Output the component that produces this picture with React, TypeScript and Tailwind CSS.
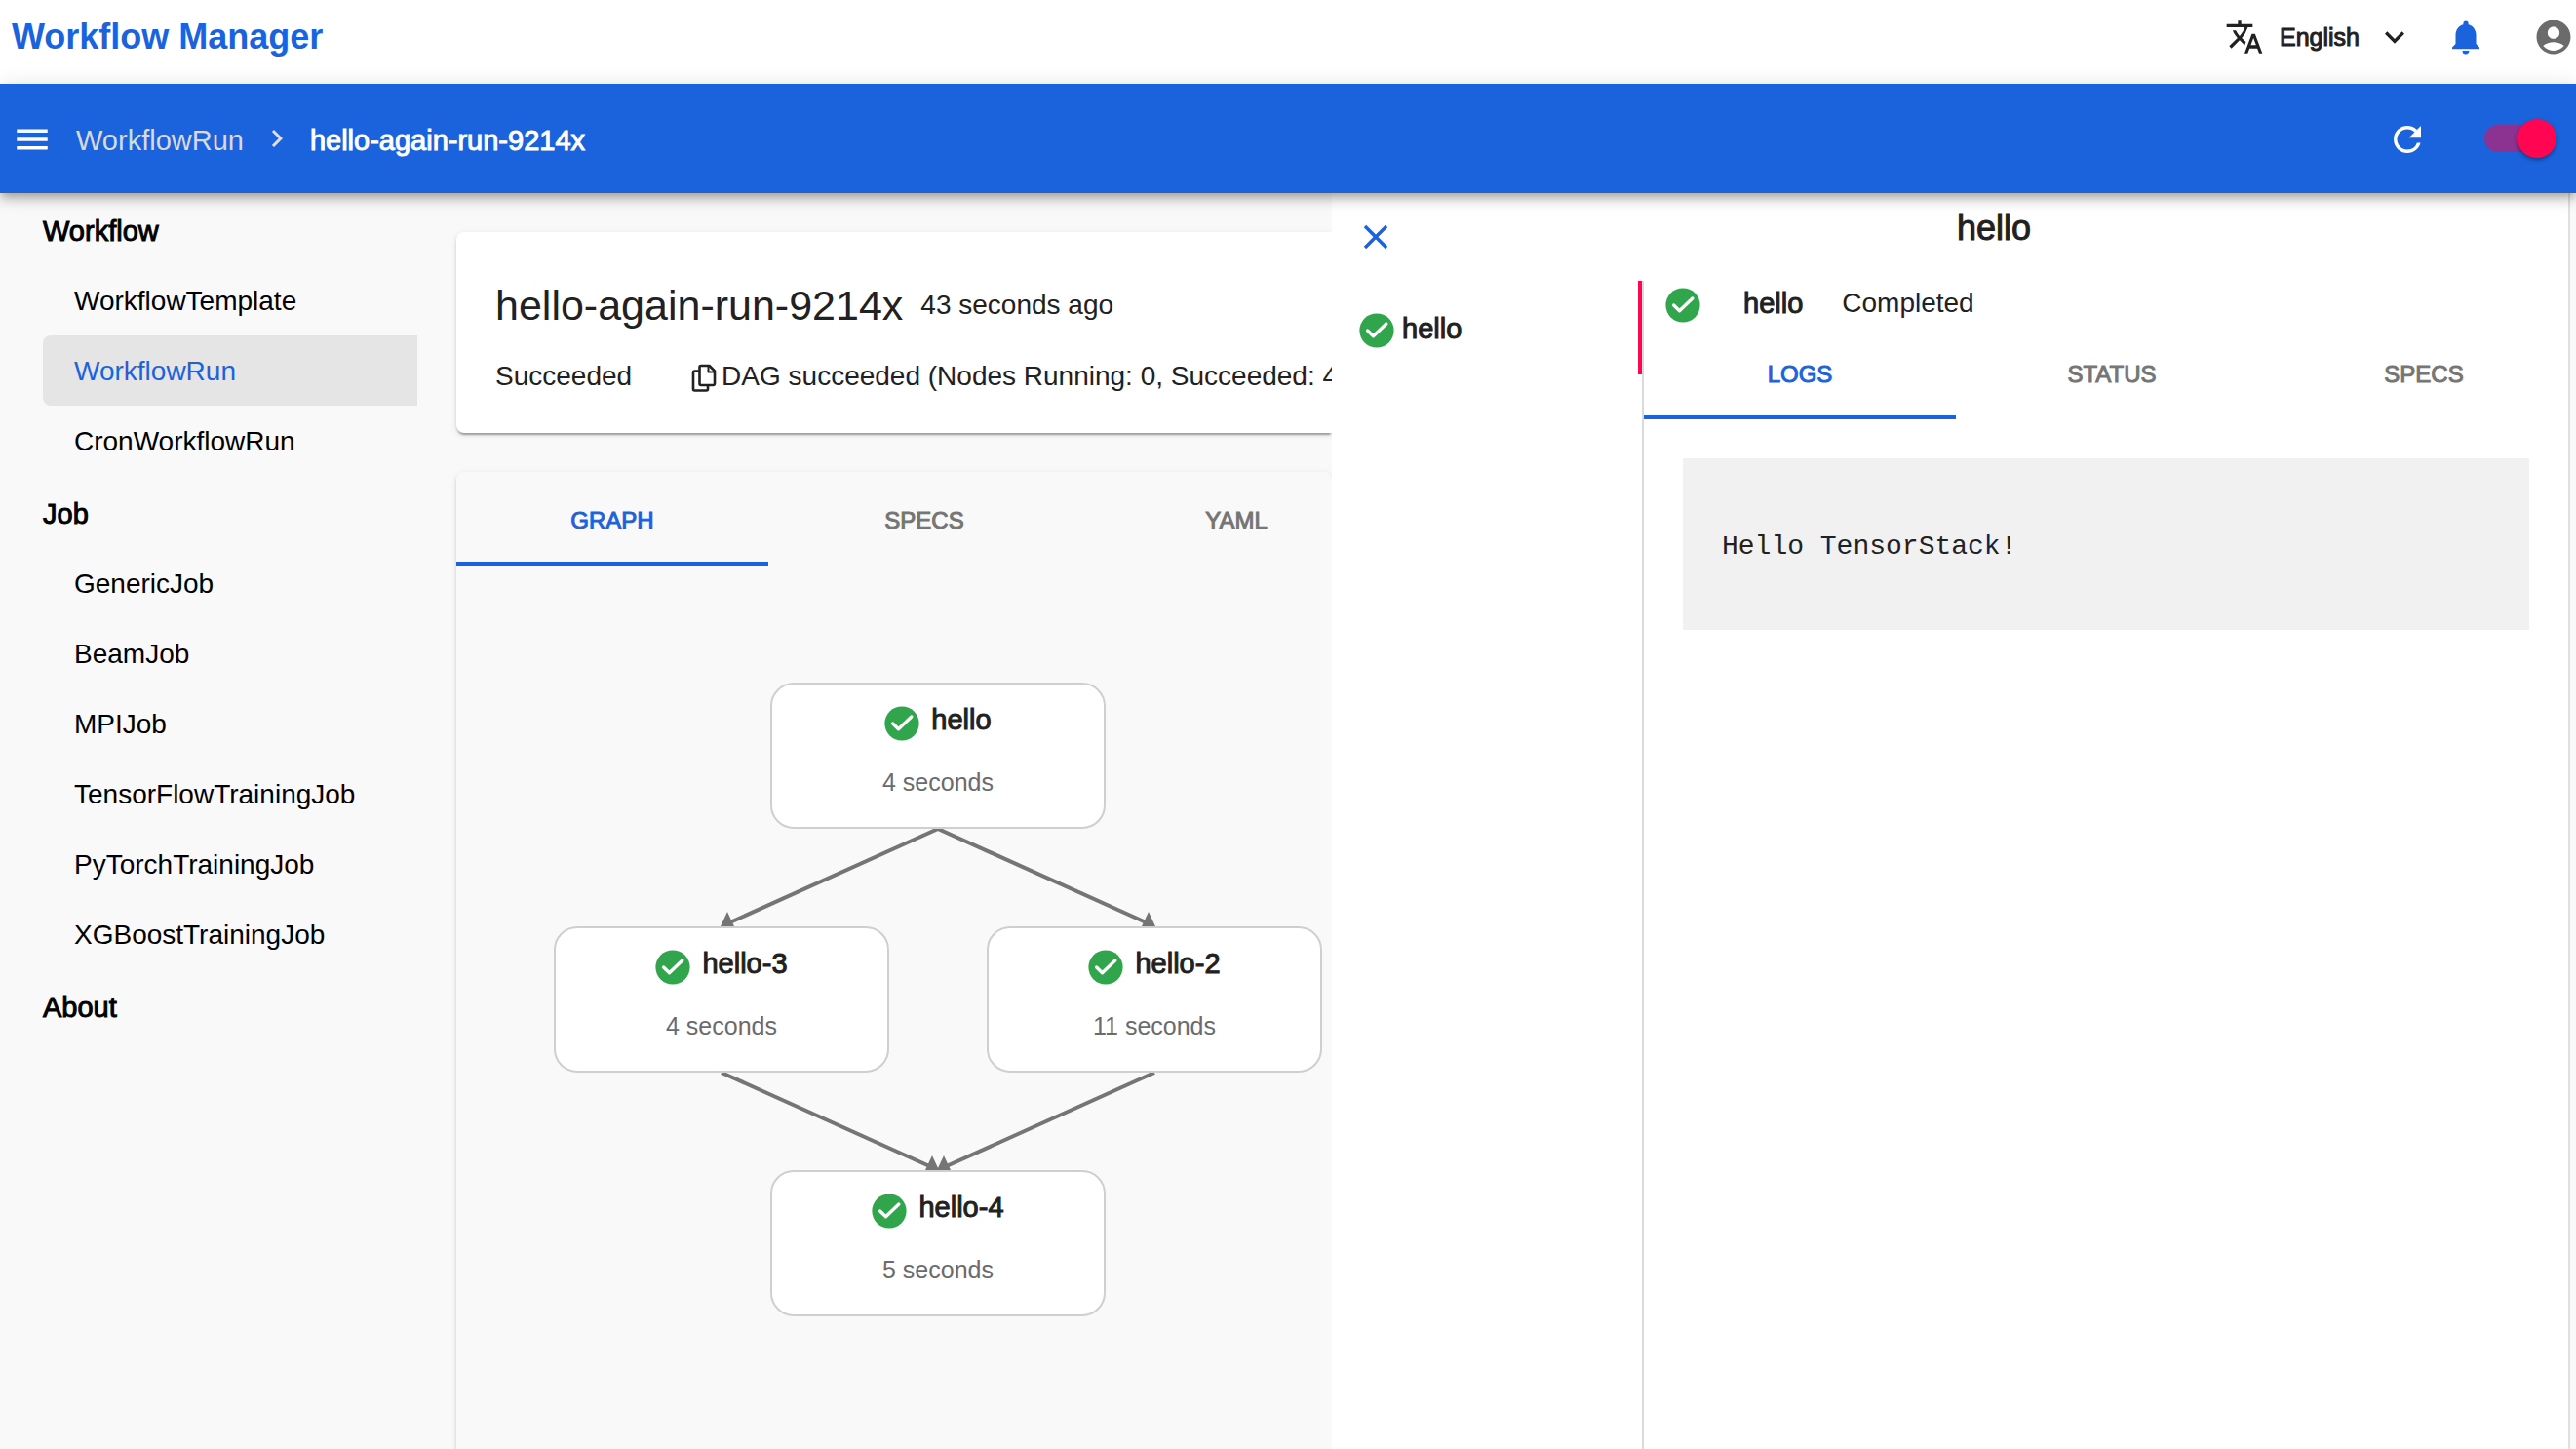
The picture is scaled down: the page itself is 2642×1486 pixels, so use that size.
import React from "react";
import {
  MdTranslate,
  MdExpandMore,
  MdNotifications,
  MdAccountCircle,
  MdMenu,
  MdChevronRight,
  MdRefresh,
  MdClose,
} from "react-icons/md";

const groups = [
  { title: "Workflow", items: ["WorkflowTemplate", "WorkflowRun", "CronWorkflowRun"] },
  {
    title: "Job",
    items: ["GenericJob", "BeamJob", "MPIJob", "TensorFlowTrainingJob", "PyTorchTrainingJob", "XGBoostTrainingJob"],
  },
  { title: "About", items: [] },
];

const nodes = [
  { name: "hello", time: "4 seconds", x: 322, y: 120 },
  { name: "hello-3", time: "4 seconds", x: 100, y: 370 },
  { name: "hello-2", time: "11 seconds", x: 544, y: 370 },
  { name: "hello-4", time: "5 seconds", x: 322, y: 620 },
];

function CheckBadge() {
  return (
    <svg viewBox="0 0 36 36" className="mt-1 size-9 shrink-0" aria-hidden="true">
      <circle cx="18" cy="18" r="17.6" fill="#31a54c" />
      <path d="M8.6 18l5.9 5.7L27.8 11" fill="none" stroke="#fff" strokeWidth="3.4" strokeLinecap="round" strokeLinejoin="round" />
    </svg>
  );
}

function CopyIcon() {
  return (
    <svg viewBox="0 0 28 30" className="mt-1 h-[30px] w-7" fill="none" stroke="currentColor" strokeWidth="2.6" strokeLinejoin="round" aria-hidden="true">
      <path d="M11 2h8.5l5.5 5.5V20.5a1.5 1.5 0 0 1-1.5 1.5H11a1.5 1.5 0 0 1-1.5-1.5V3.5A1.5 1.5 0 0 1 11 2z" />
      <path d="M18.5 2v6.5H25" strokeWidth="2" />
      <path d="M9.5 7.5h-5A1.5 1.5 0 0 0 3 9v17a1.5 1.5 0 0 0 1.5 1.5H16.5a1.5 1.5 0 0 0 1.5-1.5v-4" />
    </svg>
  );
}

function Tabs({ labels }: { labels: string[] }) {
  return (
    <div role="tablist" className="flex h-24">
      {labels.map((label, i) => (
        <button
          key={label}
          type="button"
          role="tab"
          aria-selected={i === 0}
          className={
            i === 0
              ? "w-80 shrink-0 border-y-4 border-t-transparent border-b-[#1b63dd] pt-1 text-2xl text-[#1b63dd] [-webkit-text-stroke:1px]"
              : "w-80 shrink-0 pt-1 text-2xl text-[#757575] [-webkit-text-stroke:1px]"
          }
        >
          {label}
        </button>
      ))}
    </div>
  );
}

function Arrow({ x, y }: { x: number; y: number }) {
  return <path d={`M${x - 7} ${y}L${x} ${y - 15}L${x + 7} ${y}z`} fill="#757575" />;
}

function Graph() {
  return (
    <div className="relative h-[1000px]">
      <svg viewBox="0 0 900 1000" className="absolute top-0 left-0 h-[1000px] w-[900px]" aria-hidden="true">
        <g stroke="#757575" strokeWidth="4" fill="none">
          <path d="M494 270L274 369" />
          <path d="M494 270L714 369" />
          <path d="M272 520L492 619" />
          <path d="M716 520L496 619" />
        </g>
        <Arrow x={278} y={370} />
        <Arrow x={710} y={370} />
        <Arrow x={488} y={620} />
        <Arrow x={500} y={620} />
      </svg>
      {nodes.map((n) => (
        <button
          key={n.name}
          type="button"
          style={{ left: n.x, top: n.y }}
          className="absolute flex h-[150px] w-[344px] flex-col items-center rounded-3xl border-2 border-[#cfcfcf] bg-white pt-[18px]"
        >
          <span className="flex items-end gap-3">
            <CheckBadge />
            <span className="pb-1 text-[29px] leading-9 text-[#212121] [-webkit-text-stroke:1px]">{n.name}</span>
          </span>
          <span className="pt-6 text-[25px] leading-9 text-[#6b6b6b]">{n.time}</span>
        </button>
      ))}
    </div>
  );
}

export default function App() {
  return (
    <div className="flex h-screen flex-col overflow-hidden bg-[#f9f9f9] font-['Liberation_Sans',Arial,sans-serif] text-[28px] leading-9 text-[#212121]">
      <header className="flex h-[86px] shrink-0 items-center bg-white pr-0.5 pb-2.5 pl-3">
        <a href="#home" className="text-4xl font-bold text-[#1b63dd]">Workflow Manager</a>
        <button type="button" className="ml-auto flex items-center text-[25px]">
          <MdTranslate className="size-10" />
          <span className="pl-4 [-webkit-text-stroke:1px]">English</span>
          <MdExpandMore className="ml-4 size-10" />
        </button>
        <button type="button" aria-label="Notifications" className="ml-8">
          <MdNotifications className="size-[42px] text-[#1b63dd]" />
        </button>
        <button type="button" aria-label="Account" className="ml-12">
          <MdAccountCircle className="size-[42px] text-[#6b6b6b]" />
        </button>
      </header>

      <div className="relative z-10 flex h-28 shrink-0 items-center bg-[#1b63dd] pl-3 text-white shadow-[0_4px_8px_-2px_rgba(0,0,0,0.2),0_8px_10px_0_rgba(0,0,0,0.14),0_2px_20px_0_rgba(0,0,0,0.12)]">
        <button type="button" aria-label="Menu" className="pt-0.5">
          <MdMenu className="size-[42px]" />
        </button>
        <nav aria-label="Breadcrumb" className="flex items-center pl-6 text-[29px]">
          <a href="#runs" className="pt-1 text-[#d9d9d9]">WorkflowRun</a>
          <MdChevronRight className="mx-4 size-9 text-[#e0e0e0]" />
          <span className="pt-1 [-webkit-text-stroke:1px]">hello-again-run-9214x</span>
        </nav>
        <button type="button" aria-label="Refresh" className="ml-auto pt-0.5">
          <MdRefresh className="size-[42px]" />
        </button>
        <label className="mr-5 ml-[58px] flex h-10 w-[74px] cursor-pointer items-center">
          <input type="checkbox" role="switch" defaultChecked aria-label="Auto refresh" className="peer sr-only" />
          <span className="flex h-7 w-[68px] items-center justify-end rounded-full bg-[#8c3291]">
            <span className="-mr-1.5 size-10 shrink-0 rounded-full bg-[#ff0552] shadow-[0_2px_4px_rgba(0,0,0,0.4)]" />
          </span>
        </label>
      </div>

      <div className="flex min-h-0 flex-1">
        <nav aria-label="Main" className="w-[428px] shrink-0 pl-11 text-black">
          {groups.map((g) => (
            <section key={g.title} className="pt-0.5">
              <h2 className="flex h-[72px] items-center pt-0.5 text-[29px] [-webkit-text-stroke:1px]">{g.title}</h2>
              {g.items.map((item) => (
                <a
                  key={item}
                  href={`#${item}`}
                  className={
                    item === "WorkflowRun"
                      ? "flex h-[72px] items-center rounded-l-lg bg-[#e5e5e5] pt-0.5 pl-8 text-[#1b63dd]"
                      : "flex h-[72px] items-center pt-0.5 pl-8"
                  }
                >
                  {item}
                </a>
              ))}
            </section>
          ))}
        </nav>

        <main className="min-w-0 flex-1 overflow-hidden pt-10 pl-10">
          <section className="h-[206px] rounded-l-lg bg-white px-10 pt-12 shadow-[0_4px_2px_-2px_rgba(0,0,0,0.2),0_2px_2px_0_rgba(0,0,0,0.14),0_2px_6px_0_rgba(0,0,0,0.12)]">
            <div className="flex items-center gap-[18px] whitespace-nowrap">
              <h1 className="text-[43px] leading-[54px]">hello-again-run-9214x</h1>
              <span>43 seconds ago</span>
            </div>
            <div className="flex items-center pt-7 whitespace-nowrap">
              <span>Succeeded</span>
              <button type="button" aria-label="Copy message" className="ml-15">
                <CopyIcon />
              </button>
              <span className="pl-1">DAG succeeded (Nodes Running: 0, Succeeded: 4)</span>
            </div>
          </section>
          <section className="mt-10 rounded-lg shadow-[0_4px_2px_-2px_rgba(0,0,0,0.2),0_2px_2px_0_rgba(0,0,0,0.14),0_2px_6px_0_rgba(0,0,0,0.12)]">
            <Tabs labels={["GRAPH", "SPECS", "YAML"]} />
            <Graph />
          </section>
        </main>

        <aside className="mr-1.5 flex w-[1270px] shrink-0 flex-col border-r-2 border-[#e0e0e0] bg-white">
          <div className="flex h-[90px] shrink-0">
            <button type="button" aria-label="Close" className="flex size-[90px] items-center justify-center">
              <MdClose className="size-[42px] text-[#1b63dd]" />
            </button>
            <h2 className="flex-1 pt-4 text-center text-4xl [-webkit-text-stroke:1px]">hello</h2>
          </div>
          <div className="flex min-h-0 flex-1">
            <div className="w-[318px] shrink-0">
              <button type="button" className="flex h-24 w-full items-center gap-2 border-r-4 border-[#ff0552] pt-0.5 pl-7 text-[29px]">
                <CheckBadge />
                <span className="[-webkit-text-stroke:1px]">hello</span>
              </button>
            </div>
            <div className="min-w-0 flex-1 border-l-2 border-[#dadada]">
              <div className="flex h-[46px] items-center pl-[22px]">
                <CheckBadge />
                <span className="pl-11 text-[29px] [-webkit-text-stroke:1px]">hello</span>
                <span className="pl-10">Completed</span>
              </div>
              <Tabs labels={["LOGS", "STATUS", "SPECS"]} />
              <pre className="m-10 flex h-44 items-center bg-[#f1f1f1] px-10 pt-1.5 font-['Liberation_Mono',monospace]">Hello TensorStack!</pre>
            </div>
          </div>
        </aside>
      </div>
    </div>
  );
}
